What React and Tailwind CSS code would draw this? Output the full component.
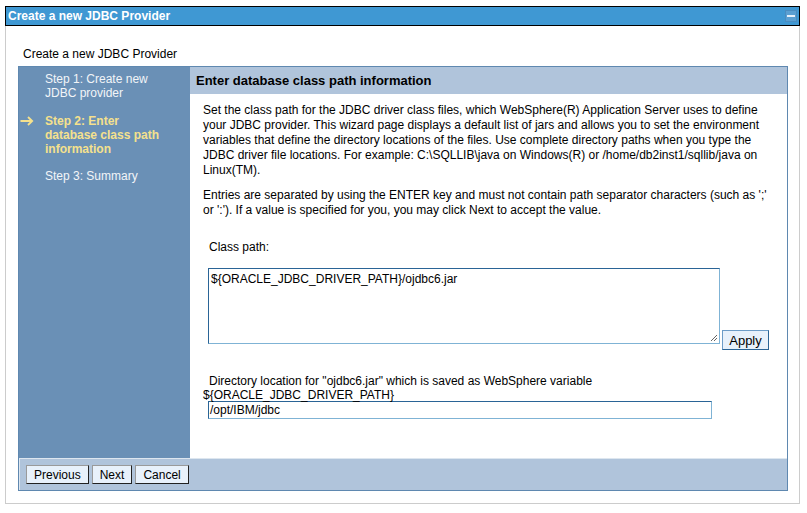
import React from "react";

const font = { fontFamily: '"Liberation Sans", Arial, sans-serif' };

function Btn({ children, className = "" }) {
  return (
    <button
      className={
        "h-[19px] px-[7px] text-[12px] leading-none text-black bg-[#e8f1fb] border border-[#9a9a9a] border-r-[#222] border-b-[#222] " +
        className
      }
    >
      {children}
    </button>
  );
}

export default function App() {
  return (
    <div className="w-[807px] h-[513px] bg-white pt-[6px]" style={font}>
      <div className="ml-[5px] w-[795px]">
        {/* title bar */}
        <div className="h-[20px] border border-black bg-[#3f98d3] flex items-center justify-between pl-[2px] pr-[2px]">
          <span className="text-white font-bold text-[12px] leading-none">Create a new JDBC Provider</span>
          <div className="w-[12px] h-[12px] bg-[#5a9fd2] border border-[#4a8cc0] flex items-center justify-center">
            <div className="w-[8px] h-[2px] bg-[#e6f0fa]" />
          </div>
        </div>

        {/* panel */}
        <div className="h-[478px] border-x border-b border-[#cccccc] pl-[12px] pt-[21px]">
          <div className="pl-[5px] text-[12px] leading-[15px] text-black">Create a new JDBC Provider</div>

          <div className="mt-[4px] w-[770px] h-[425px] border border-[#5f88b0] flex flex-col">
            <div className="flex flex-1">
              {/* nav */}
              <div className="w-[171px] bg-[#6a90b6] text-[12px] leading-[14px] text-[#f2f5f8] pt-[5px]">
                <div className="pl-[26px]">Step 1: Create new<br />JDBC provider</div>
                <div className="flex mt-[14px]">
                  <span className="w-[26px] pl-[1px] pt-[2px]">
                    <svg width="14" height="10" viewBox="0 0 14 10">
                      <path d="M0.5 5 H12 M8 1 L12.2 5 L8 9" stroke="#f5e18d" strokeWidth="1.8" fill="none" />
                    </svg>
                  </span>
                  <span className="font-bold text-[#f5e18d]">Step 2: Enter<br />database class path<br />information</span>
                </div>
                <div className="pl-[26px] mt-[13px]">Step 3: Summary</div>
              </div>

              {/* content */}
              <div className="flex-1 bg-white flex flex-col">
                <div className="h-[27px] bg-[#b0c4db] flex items-center pl-[6px] text-[13px] font-bold text-black">
                  Enter database class path information
                </div>
                <div className="pl-[13px] pr-[14px] pt-[9px] text-[12px] leading-[15px] text-black">
                  <p>
                    Set the class path for the JDBC driver class files, which WebSphere(R) Application Server uses to define
                    your JDBC provider. This wizard page displays a default list of jars and allows you to set the environment
                    variables that define the directory locations of the files. Use complete directory paths when you type the
                    JDBC driver file locations. For example: C:\SQLLIB\java on Windows(R) or /home/db2inst1/sqllib/java on
                    Linux(TM).
                  </p>
                  <p className="mt-[10px]">
                    Entries are separated by using the ENTER key and must not contain path separator characters (such as ';'
                    or ':'). If a value is specified for you, you may click Next to accept the value.
                  </p>

                  <div className="mt-[22px] pl-[6px]">Class path:</div>
                  <div className="flex mt-[13px] pl-[5px]">
                    <div className="relative w-[512px] h-[76px] border border-[#7fb3d5] border-t-[#2a6496] border-l-[#2a6496] px-[2px] pt-[3px]">
                      <span>{"${ORACLE_JDBC_DRIVER_PATH}/ojdbc6.jar"}</span>
                      <svg className="absolute right-[1px] bottom-[1px]" width="8" height="8" viewBox="0 0 8 8">
                        <path d="M7 1 L1 7 M7 4 L4 7" stroke="#666" strokeWidth="1" />
                      </svg>
                    </div>
                    <button className="ml-[2px] mt-[62px] w-[47px] h-[20px] bg-[#e8f1fb] border border-[#6d9cc7] border-r-[#2a6496] border-b-[#2a6496] text-[13px] leading-none text-black">
                      Apply
                    </button>
                  </div>

                  <div className="mt-[24px]">
                    <div className="pl-[6px]">Directory location for "ojdbc6.jar" which is saved as WebSphere variable</div>
                    <div className="-mt-[1px]">{"${ORACLE_JDBC_DRIVER_PATH}"}</div>
                  </div>
                  <div className="-mt-[2px] ml-[5px] w-[504px] h-[18px] border border-[#7fb3d5] border-t-[#2a6496] border-l-[#2a6496] px-[1px] flex items-center">
                    /opt/IBM/jdbc
                  </div>
                </div>
              </div>
            </div>

            {/* footer */}
            <div className="h-[32px] bg-[#b0c4db] border-t border-l border-[#dde6ef] flex items-center gap-[3px] pl-[6px]">
              <Btn>Previous</Btn>
              <Btn>Next</Btn>
              <Btn>Cancel</Btn>
            </div>
          </div>
        </div>
      </div>
    </div>
  );
}
